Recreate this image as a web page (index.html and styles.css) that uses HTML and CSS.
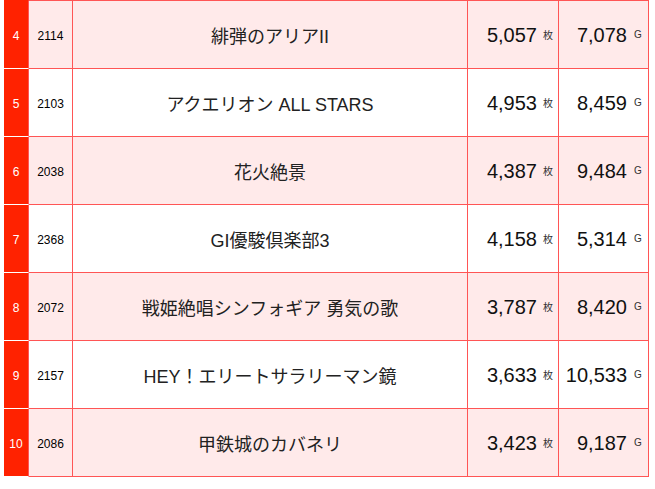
FILE: index.html
```html
<!DOCTYPE html>
<html lang="ja">
<head>
<meta charset="utf-8">
<link rel="stylesheet" href="styles.css">
</head>
<body>
<div class="table">
  <div class="row odd first">
    <div class="cell rank">4</div><div class="cell code">2114</div><div class="cell name">緋弾のアリアII</div><div class="cell num"><span class="val">5,057</span><span class="unit">枚</span></div><div class="cell num"><span class="val">7,078</span><span class="unit">G</span></div>
  </div>
  <div class="row">
    <div class="cell rank">5</div><div class="cell code">2103</div><div class="cell name">アクエリオン ALL STARS</div><div class="cell num"><span class="val">4,953</span><span class="unit">枚</span></div><div class="cell num"><span class="val">8,459</span><span class="unit">G</span></div>
  </div>
  <div class="row odd">
    <div class="cell rank">6</div><div class="cell code">2038</div><div class="cell name">花火絶景</div><div class="cell num"><span class="val">4,387</span><span class="unit">枚</span></div><div class="cell num"><span class="val">9,484</span><span class="unit">G</span></div>
  </div>
  <div class="row">
    <div class="cell rank">7</div><div class="cell code">2368</div><div class="cell name">GI優駿倶楽部3</div><div class="cell num"><span class="val">4,158</span><span class="unit">枚</span></div><div class="cell num"><span class="val">5,314</span><span class="unit">G</span></div>
  </div>
  <div class="row odd">
    <div class="cell rank">8</div><div class="cell code">2072</div><div class="cell name">戦姫絶唱シンフォギア 勇気の歌</div><div class="cell num"><span class="val">3,787</span><span class="unit">枚</span></div><div class="cell num"><span class="val">8,420</span><span class="unit">G</span></div>
  </div>
  <div class="row">
    <div class="cell rank">9</div><div class="cell code">2157</div><div class="cell name">HEY！エリートサラリーマン鏡</div><div class="cell num"><span class="val">3,633</span><span class="unit">枚</span></div><div class="cell num"><span class="val">10,533</span><span class="unit">G</span></div>
  </div>
  <div class="row odd">
    <div class="cell rank">10</div><div class="cell code">2086</div><div class="cell name">甲鉄城のカバネリ</div><div class="cell num"><span class="val">3,423</span><span class="unit">枚</span></div><div class="cell num"><span class="val">9,187</span><span class="unit">G</span></div>
  </div>
</div>
</body>
</html>
```
FILE: styles.css
```css
html, body {
  margin: 0;
  padding: 0;
  background: #fff;
}
body {
  font-family: "Liberation Sans", "Noto Sans CJK JP", sans-serif;
  color: #111;
}
.table {
  padding-left: 4px;
  width: 645px;
}
.row {
  display: grid;
  grid-template-columns: 25px 44px 395px 91px 90px;
  height: 68px;
}
.row.first {
  height: 69px;
}
.row.first .cell {
  border-top: 1px solid #ff5555;
}
.row.first .rank {
  border-top-color: #ff2200;
}
.row.odd .cell {
  background: #ffeaea;
}
.cell {
  box-sizing: border-box;
  border-right: 1px solid #ff5555;
  border-bottom: 1px solid #ff5555;
  display: flex;
  align-items: center;
  justify-content: center;
}
.row .cell.rank {
  background: #ff2200;
  color: #fff;
  font-size: 12px;
  border-bottom-color: #fff;
  padding-top: 2px;
}
.row:last-child .cell.rank {
  border-bottom-color: #fff;
}
.code {
  font-size: 12px;
  color: #000;
  padding-top: 2px;
}
.name {
  font-size: 18px;
  color: #222;
}
.num {
  justify-content: flex-end;
  padding-right: 5px;
  color: #111;
}
.val {
  font-size: 20px;
  padding-top: 1px;
}
.unit {
  display: inline-block;
  width: 10px;
  margin-left: 6px;
  font-size: 10px;
  text-align: center;
  color: #333;
}
```
